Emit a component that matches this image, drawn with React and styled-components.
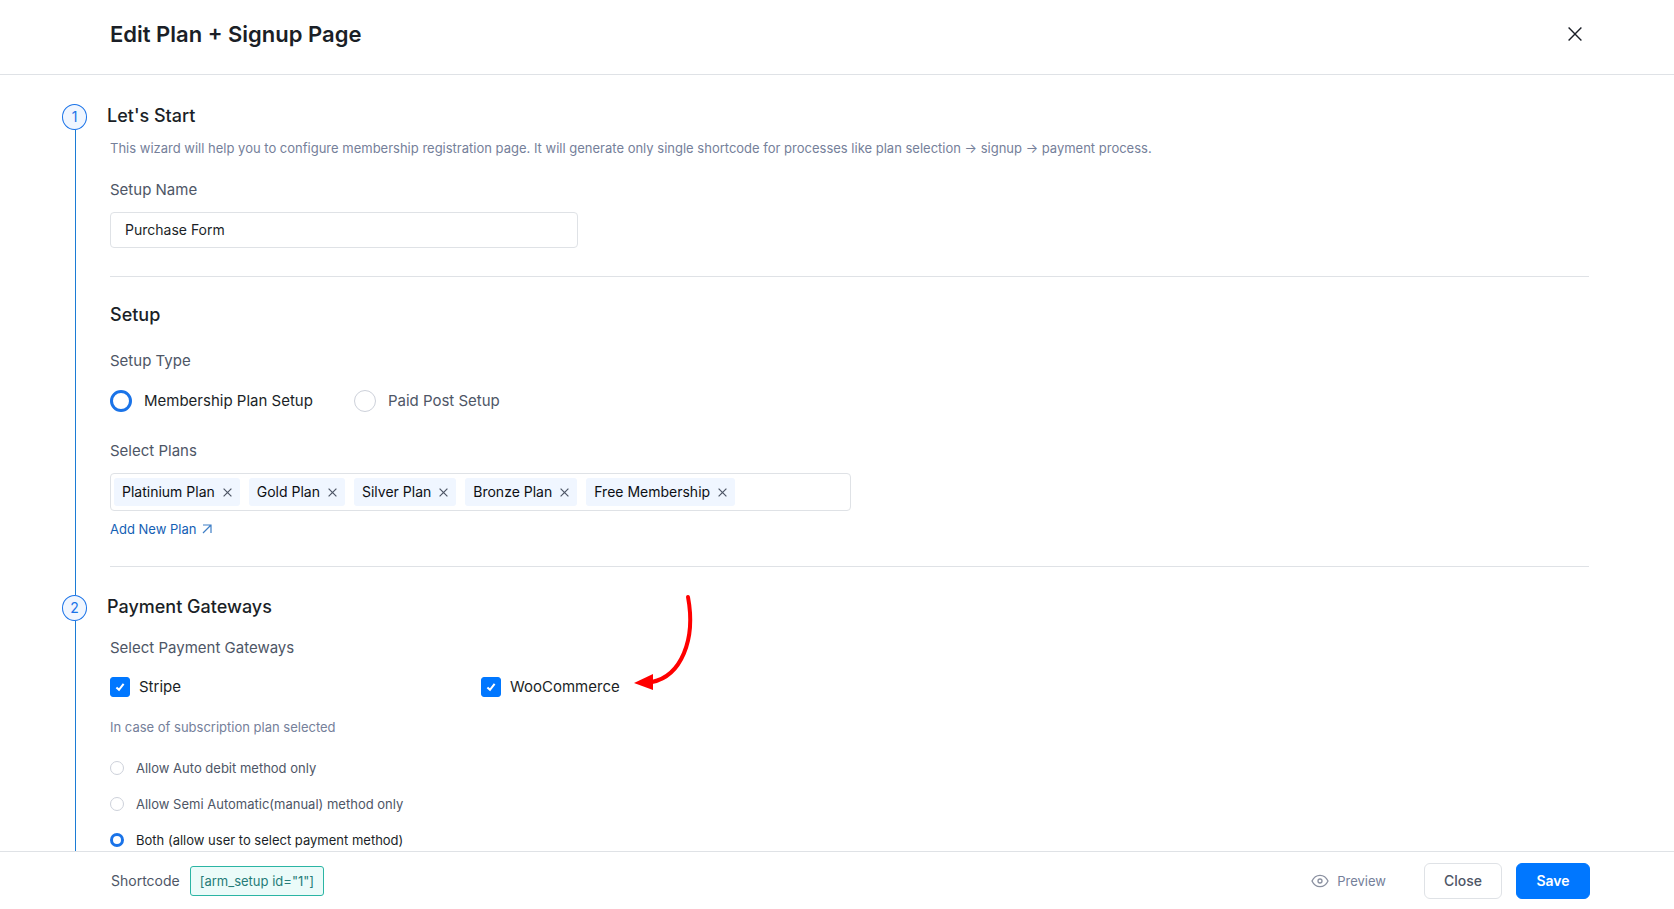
import React from 'react';
import styled, { createGlobalStyle, css } from 'styled-components';

const color = {
  ink: '#1b1f27',
  text: '#4e5666',
  muted: '#75809a',
  line: '#dfe2e6',
  control: '#cdd1da',
  blue: '#0077ff',
  ring: '#1a73e8',
  rail: '#1c7cd5',
  link: '#1560b4',
  tint: '#f0f6ff',
};

const GlobalStyle = createGlobalStyle`
  *, *::before, *::after { box-sizing: border-box; }
  body {
    margin: 0;
    background: #fff;
    color: ${color.text};
    font-family: Inter, 'Open Sans', sans-serif;
    font-size: 14px;
    line-height: 20px;
  }
  button, input { font: inherit; color: inherit; }
  button { cursor: pointer; }
`;

const Page = styled.div`
  display: flex;
  flex-direction: column;
  height: 100vh;
`;

const Header = styled.header`
  display: flex;
  flex: none;
  align-items: center;
  justify-content: space-between;
  padding: 18px 84px 24px 110px;
  border-bottom: 1px solid ${color.line};
`;

const Title = styled.h1`
  margin: 0;
  color: ${color.ink};
  font-size: 22px;
  font-weight: 600;
  line-height: 32px;
`;

const IconButton = styled.button`
  display: flex;
  padding: ${(p) => p.$pad || 0}px;
  border: 0;
  background: none;
  color: ${(p) => (p.$dark ? color.ink : color.text)};
`;

const Main = styled.main`
  flex: 1;
  min-height: 0;
  overflow-y: auto;
  scrollbar-width: none;
  padding: 29px 85px 0 62px;
`;

const Step = styled.section`
  display: flex;
  gap: 20px;
`;

const Rail = styled.div`
  display: flex;
  flex: none;
  flex-direction: column;
  width: 25px;

  &::after {
    content: '';
    flex: 1;
    width: 14px;
    border-right: 1px solid ${color.rail};
  }
`;

const StepNumber = styled.span`
  display: flex;
  align-items: center;
  justify-content: center;
  height: 26px;
  border: 1px solid ${color.ring};
  border-radius: 50%;
  background: ${color.tint};
  color: ${color.ring};
`;

const StepContent = styled.div`
  flex: 1;
  min-width: 0;
`;

const Heading = styled.h2`
  margin: 0;
  color: ${color.ink};
  font-size: 18px;
  font-weight: 500;
  line-height: 24px;
`;

const StepBody = styled.div`
  padding-left: 3px;
`;

const Block = styled.div`
  padding-top: ${(p) => p.$top}px;
`;

const Note = styled.p`
  margin: 0;
  color: ${color.muted};
  font-size: 13px;
`;

const labelText = css`
  display: block;
  margin: 0;
  padding: 0;
  font-size: 15px;
  line-height: 20px;
`;

const Label = styled.label`${labelText}`;
const GroupLabel = styled.div`${labelText}`;

const TextInput = styled.input`
  display: block;
  width: 468px;
  max-width: 100%;
  height: 36px;
  margin-top: 12px;
  padding: 0 14px 1px;
  border: 1px solid ${color.line};
  border-radius: 4px;
  background: #fff;
  color: ${color.ink};
`;

const Divider = styled.hr`
  margin: ${(p) => p.$top}px 0 ${(p) => p.$bottom}px;
  border: 0;
  border-top: 1px solid ${color.line};
`;

const OptionRow = styled.div`
  display: flex;
  gap: 41px;
  padding-top: 19px;
`;

const OptionStack = styled.div`
  display: flex;
  flex-direction: column;
  align-items: flex-start;
  gap: 16px;
  padding: 21px 0 24px;
`;

const Option = styled.label`
  display: flex;
  align-items: center;
  gap: 12px;
  color: ${(p) => (p.$active ? color.ink : color.text)};
  font-size: ${(p) => (p.$small ? 13 : 15)}px;
`;

const Radio = styled.input.attrs({ type: 'radio' })`
  appearance: none;
  width: ${(p) => p.$size}px;
  height: ${(p) => p.$size}px;
  margin: 0;
  border: 1px solid ${color.control};
  border-radius: 50%;
  background: #fff;

  &:checked { border: 3px solid ${color.ring}; }
`;

const TagBox = styled.ul`
  display: flex;
  flex-wrap: wrap;
  gap: 9px;
  width: 741px;
  max-width: 100%;
  margin: 12px 0 0;
  padding: 4px 3px;
  border: 1px solid ${color.line};
  border-radius: 4px;
  list-style: none;
`;

const Tag = styled.li`
  display: flex;
  align-items: center;
  gap: 6px;
  height: 28px;
  padding: 0 6px 0 8px;
  border-radius: 3px;
  background: ${color.tint};
  color: #0c0f14;
`;

const PlanLink = styled.a`
  display: inline-flex;
  align-items: center;
  gap: 6px;
  margin-top: 8px;
  color: ${color.link};
  font-size: 13px;
  text-decoration: none;
`;

const Gateways = styled.div`
  display: grid;
  grid-template-columns: 371px 371px;
  padding-top: 19px;
`;

const GatewayOption = styled.label`
  position: relative;
  display: flex;
  align-items: center;
  gap: 9px;
  color: ${color.ink};
  font-size: 15px;
`;

const CheckWrap = styled.span`
  display: grid;
  width: 20px;
  height: 20px;

  & > * { grid-area: 1 / 1; place-self: center; }
`;

const Checkbox = styled.input.attrs({ type: 'checkbox' })`
  appearance: none;
  width: 20px;
  height: 20px;
  margin: 0;
  border: 1px solid ${color.control};
  border-radius: 3px;

  &:checked { border-color: ${color.blue}; background: ${color.blue}; }
  & + svg { pointer-events: none; }
`;

const Arrow = styled.svg`
  position: absolute;
  left: 153px;
  bottom: 6px;
  pointer-events: none;
`;

const Footer = styled.footer`
  display: flex;
  flex: none;
  align-items: center;
  padding: 11px 84px 10px 111px;
  border-top: 1px solid ${color.line};
`;

const Shortcode = styled.code`
  margin-left: 10px;
  padding: 4px 9px;
  border: 1px solid #2bb5a4;
  border-radius: 3px;
  background: #ebfbf9;
  color: #267b78;
  font-family: inherit;
  font-size: 13px;
`;

const Actions = styled.div`
  display: flex;
  align-items: center;
  margin-left: auto;
`;

const PreviewButton = styled.button`
  display: flex;
  align-items: center;
  gap: 8px;
  margin-right: 38px;
  padding: 0;
  border: 0;
  background: none;
  color: ${color.muted};
  font-size: 13px;
`;

const Button = styled.button`
  min-width: ${(p) => (p.$primary ? 74 : 78)}px;
  height: 36px;
  margin-left: ${(p) => (p.$primary ? 14 : 0)}px;
  border: 1px solid ${(p) => (p.$primary ? color.blue : color.line)};
  border-radius: 6px;
  background: ${(p) => (p.$primary ? color.blue : '#fff')};
  color: ${(p) => (p.$primary ? '#fff' : color.text)};
  font-weight: ${(p) => (p.$primary ? 600 : 500)};
`;

const Cross = ({ size, width }) => (
  <svg width={size} height={size} viewBox={`0 0 ${size} ${size}`} fill="none" stroke="currentColor" strokeWidth={width} aria-hidden="true">
    <path d={`M.6 .6L${size - 0.6} ${size - 0.6}M${size - 0.6} .6L.6 ${size - 0.6}`} />
  </svg>
);

const plans = ['Platinium Plan', 'Gold Plan', 'Silver Plan', 'Bronze Plan', 'Free Membership'];

const debitMethods = [
  'Allow Auto debit method only',
  'Allow Semi Automatic(manual) method only',
  'Both (allow user to select payment method)',
];

const Gateway = ({ name, children }) => (
  <GatewayOption>
    <CheckWrap>
      <Checkbox defaultChecked />
      <svg width="10" height="10" viewBox="0 0 10 10" fill="none" stroke="#fff" strokeWidth="2" aria-hidden="true">
        <path d="M1.4 5.4L4 7.8L8.6 1.8" />
      </svg>
    </CheckWrap>
    {name}
    {children}
  </GatewayOption>
);

export default function App() {
  return (
    <>
      <GlobalStyle />
      <Page>
        <Header>
          <Title>Edit Plan + Signup Page</Title>
          <IconButton $dark $pad={8} aria-label="Close dialog">
            <Cross size={14} width={1.4} />
          </IconButton>
        </Header>

        <Main>
          <Step>
            <Rail><StepNumber>1</StepNumber></Rail>
            <StepContent>
              <Heading>Let's Start</Heading>
              <StepBody>
                <Block $top={10}>
                  <Note>
                    This wizard will help you to configure membership registration page. It will generate only single
                    shortcode for processes like plan selection → signup → payment process.
                  </Note>
                </Block>
                <Block $top={22}>
                  <Label htmlFor="setup-name">Setup Name</Label>
                  <TextInput id="setup-name" defaultValue="Purchase Form" />
                </Block>

                <Divider $top={28} $bottom={26} />

                <Heading>Setup</Heading>
                <Block $top={24}>
                  <GroupLabel id="setup-type">Setup Type</GroupLabel>
                  <OptionRow role="radiogroup" aria-labelledby="setup-type">
                    <Option $active>
                      <Radio name="setup-type" $size={22} defaultChecked />
                      Membership Plan Setup
                    </Option>
                    <Option>
                      <Radio name="setup-type" $size={22} />
                      Paid Post Setup
                    </Option>
                  </OptionRow>
                </Block>
                <Block $top={29}>
                  <GroupLabel id="select-plans">Select Plans</GroupLabel>
                  <TagBox aria-labelledby="select-plans">
                    {plans.map((plan) => (
                      <Tag key={plan}>
                        {plan}
                        <IconButton $pad={2} aria-label={`Remove ${plan}`}>
                          <Cross size={9} width={1.2} />
                        </IconButton>
                      </Tag>
                    ))}
                  </TagBox>
                  <PlanLink href="#new-plan">
                    Add New Plan
                    <svg width="10" height="10" viewBox="0 0 10 10" fill="none" stroke="#3f7fc6" strokeWidth="1.2" aria-hidden="true">
                      <path d="M1 1H9V9M9 1L1 9" />
                    </svg>
                  </PlanLink>
                </Block>

                <Divider $top={27} $bottom={28} />
              </StepBody>
            </StepContent>
          </Step>

          <Step>
            <Rail><StepNumber>2</StepNumber></Rail>
            <StepContent>
              <Heading>Payment Gateways</Heading>
              <StepBody>
                <Block $top={19}>
                  <GroupLabel>Select Payment Gateways</GroupLabel>
                  <Gateways>
                    <Gateway name="Stripe" />
                    <Gateway name="WooCommerce">
                      <Arrow width="68" height="100" viewBox="0 0 68 100" aria-hidden="true">
                        <path d="M54 6C62 49 47 85 18 91" fill="none" stroke="#ff0000" strokeWidth="4" strokeLinecap="round" />
                        <path d="M0 92L19 83V99Z" fill="#ff0000" />
                      </Arrow>
                    </Gateway>
                  </Gateways>
                </Block>
                <Block $top={20}>
                  <Note>In case of subscription plan selected</Note>
                </Block>
                <OptionStack role="radiogroup" aria-label="Payment method">
                  {debitMethods.map((method, i) => (
                    <Option key={method} $small $active={i === 2}>
                      <Radio name="debit-method" $size={14} defaultChecked={i === 2} />
                      {method}
                    </Option>
                  ))}
                </OptionStack>
              </StepBody>
            </StepContent>
          </Step>
        </Main>

        <Footer>
          Shortcode
          <Shortcode>[arm_setup id="1"]</Shortcode>
          <Actions>
            <PreviewButton>
              <svg width="18" height="14" viewBox="0 0 18 14" fill="none" stroke="#8a90a0" strokeWidth="1.3" aria-hidden="true">
                <path d="M1 7C4.6 -.6 13.4 -.6 17 7C13.4 14.6 4.6 14.6 1 7Z" />
                <circle cx="9" cy="7" r="2" />
              </svg>
              Preview
            </PreviewButton>
            <Button>Close</Button>
            <Button $primary>Save</Button>
          </Actions>
        </Footer>
      </Page>
    </>
  );
}
